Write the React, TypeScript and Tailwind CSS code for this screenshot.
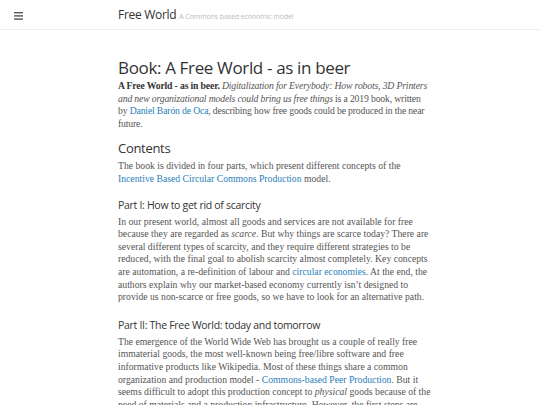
import React from "react";

const serif = "font-['Liberation_Serif',serif]";
const sans = "font-['Open_Sans',sans-serif]";
const body = `${serif} text-[9.7px] leading-[12.6px] text-[#555] whitespace-nowrap`;

const A = ({ children }: { children: React.ReactNode }) => (
  <a href="#" className="text-[#2a80b9] no-underline">
    {children}
  </a>
);

export default function App() {
  return (
    <div className="h-[405px] w-[540px] overflow-hidden bg-white">
      <header className="flex h-[30px] items-center border-b border-[#eeeeee]">
        <div className="flex w-[118px] pl-[14px] pt-[2px]">
          <svg width="10" height="8" viewBox="0 0 10 8">
            <rect x="0" y="0" width="9" height="1.4" fill="#555" />
            <rect x="0" y="3.2" width="9" height="1.4" fill="#555" />
            <rect x="0" y="6.4" width="9" height="1.4" fill="#555" />
          </svg>
        </div>
        <div className={`${sans} flex items-baseline gap-[3px]`}>
          <span className="text-[12px] tracking-[-0.3px] text-[#333]">Free World</span>
          <span className="text-[7px] tracking-[-0.1px] text-[#bbb]">A Commons based economic model</span>
        </div>
      </header>

      <main className="ml-[118px] w-[312px] pt-[25px]">
        <h1 className={`${sans} mb-[-1px] text-[17px] leading-[26px] tracking-[-0.35px] text-[#333]`}>
          Book: A Free World - as in beer
        </h1>
        <p className={`${body} tracking-[-0.15px]`}>
          <b className="text-[#333]">A Free World - as in beer.</b>{" "}
          <i>Digitalization for Everybody: How robots, 3D Printers</i>
          <br />
          <i>and new organizational models could bring us free things</i> is a 2019 book, written
          <br />
          by <A>Daniel Barón de Oca</A>, describing how free goods could be produced in the near
          <br />
          future.
        </p>

        <h2 className={`${sans} mt-[8px] text-[13px] leading-[20px] tracking-[-0.3px] text-[#333]`}>Contents</h2>
        <p className={`${body} mt-[2px]`}>
          The book is divided in four parts, which present different concepts of the
          <br />
          <A>Incentive Based Circular Commons Production</A> model.
        </p>

        <h3 className={`${sans} mt-[11px] text-[10.5px] leading-[16px] tracking-[-0.3px] text-[#333]`}>
          Part I: How to get rid of scarcity
        </h3>
        <p className={`${body} mt-[3px]`}>
          In our present world, almost all goods and services are not available for free
          <br />
          because they are regarded as <i>scarce</i>. But why things are scarce today? There are
          <br />
          several different types of scarcity, and they require different strategies to be
          <br />
          reduced, with the final goal to abolish scarcity almost completely. Key concepts
          <br />
          are automation, a re-definition of labour and <A>circular economies</A>. At the end, the
          <br />
          authors explain why our market-based economy currently isn’t designed to
          <br />
          provide us non-scarce or free goods, so we have to look for an alternative path.
        </p>

        <h3 className={`${sans} mt-[13px] text-[10.5px] leading-[16px] tracking-[-0.3px] text-[#333]`}>
          Part II: The Free World: today and tomorrow
        </h3>
        <p className={`${body} mt-[3px]`}>
          The emergence of the World Wide Web has brought us a couple of really free
          <br />
          immaterial goods, the most well-known being free/libre software and free
          <br />
          informative products like Wikipedia. Most of these things share a common
          <br />
          organization and production model - <A>Commons-based Peer Production</A>. But it
          <br />
          seems difficult to adopt this production concept to <i>physical</i> goods because of the
          <br />
          need of materials and a production infrastructure. However, the first steps are
          <br />
          already done.
        </p>
      </main>
    </div>
  );
}
